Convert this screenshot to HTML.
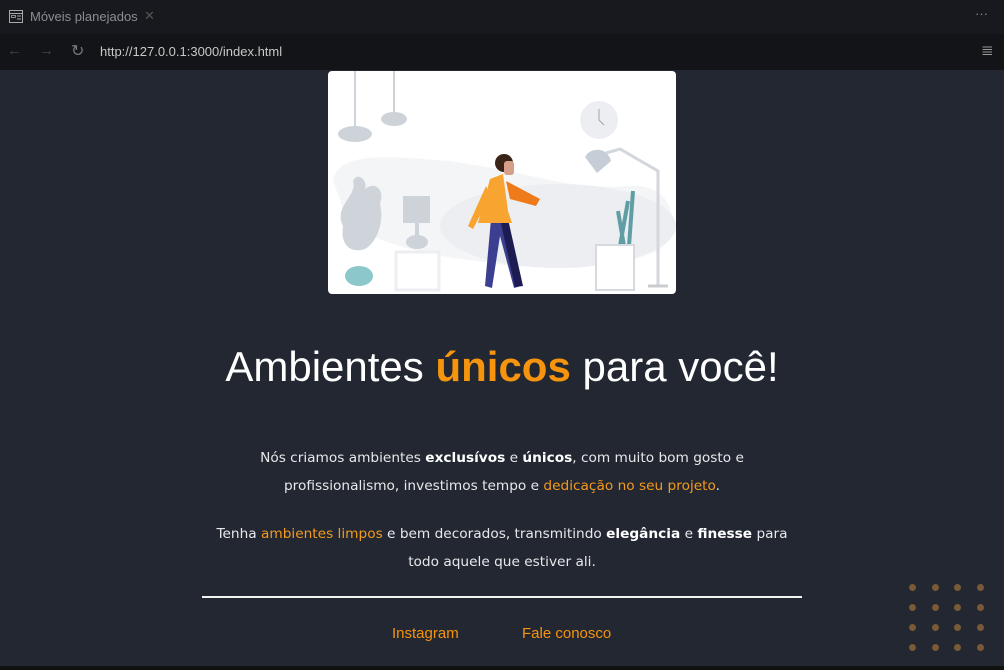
<!DOCTYPE html>
<html><head><meta charset="utf-8"><style>
*{margin:0;padding:0;box-sizing:border-box}
body{width:1004px;height:670px;background:#222731;overflow:hidden;font-family:"Liberation Sans",sans-serif;position:relative}
.tab{position:absolute;top:0;left:0;width:1004px;height:34px;background:#17191e}
.addr{position:absolute;top:34px;left:0;width:1004px;height:36px;background:#121418}
.t{position:absolute;color:#8a8d94;font-size:13px}
.card{position:absolute;left:328px;top:71px;width:348px;height:223px;background:#fff;border-radius:4px;overflow:hidden}
h1{position:absolute;top:343px;left:0;width:1004px;text-align:center;color:#fff;font-weight:400;font-size:42px}
h1 b{color:#f7940e;font-weight:700}
p{position:absolute;left:102px;width:800px;text-align:center;color:#e8e8ea;font-size:13.7px;line-height:28px;font-family:"DejaVu Sans",sans-serif;white-space:nowrap}
p b{color:#fff}
.o{color:#f49a1e}
.hr{position:absolute;left:202px;top:596px;width:600px;height:2px;background:#f2f2f2}
.lk{position:absolute;top:625px;color:#f7940e;font-size:15px}
.dots{position:absolute;left:909px;top:584px}
.dots i{position:absolute;width:7px;height:7px;border-radius:50%;background:#7a5a36}
</style></head><body>
<div class="tab"></div>
<div class="addr"></div>
<svg style="position:absolute;left:9px;top:10px" width="14" height="13" viewBox="0 0 14 13"><rect x="0.5" y="0.5" width="13" height="12" fill="none" stroke="#aaa"/><line x1="1" y1="3.5" x2="13" y2="3.5" stroke="#aaa"/><rect x="2.5" y="5.5" width="4" height="2" fill="none" stroke="#aaa" stroke-width=".8"/><line x1="8" y1="6" x2="12" y2="6" stroke="#aaa"/><line x1="8" y1="9" x2="12" y2="9" stroke="#aaa"/></svg>
<div class="t" style="left:30px;top:9px">Móveis planejados</div>
<div class="t" style="left:144px;top:8px;color:#555">✕</div>
<div class="t" style="left:975px;top:6px;color:#888">···</div>
<div class="t" style="left:7px;top:42px;color:#444;font-size:15px">←</div>
<div class="t" style="left:39px;top:42px;color:#444;font-size:15px">→</div>
<div class="t" style="left:71px;top:41px;color:#777;font-size:16px">↻</div>
<div class="t" style="left:100px;top:44px;color:#c8c8c8">http://127.0.0.1:3000/index.html</div>
<div class="t" style="left:981px;top:41px;color:#999;font-size:15px">≣</div>
<div class="card"><svg width="348" height="223" viewBox="0 0 348 223">
<path d="M5 110 C10 80 60 85 120 90 C200 100 240 120 300 115 C345 112 350 150 340 170 C320 200 200 200 150 190 C100 185 40 170 20 150 Z" fill="#f4f5f7"/>
<ellipse cx="230" cy="155" rx="118" ry="42" fill="#eceef1"/>
<line x1="27" y1="0" x2="27" y2="58" stroke="#cdd3d9" stroke-width="2"/><ellipse cx="27" cy="63" rx="17" ry="8" fill="#cdd3d9"/>
<line x1="66" y1="0" x2="66" y2="42" stroke="#cdd3d9" stroke-width="2"/><ellipse cx="66" cy="48" rx="13" ry="7" fill="#cdd3d9"/>
<circle cx="271" cy="49" r="19" fill="#eceef1"/><path d="M271 38 V49 L276 54" stroke="#9aa" fill="none"/>
<path d="M264 86 L292 78 L330 100 L330 214" stroke="#d3d6da" stroke-width="3" fill="none"/><line x1="320" y1="215" x2="340" y2="215" stroke="#c9ccd1" stroke-width="3"/>
<path d="M257 86 a14 14 0 0 1 26 4 l-14 12 z" fill="#c5ced6"/>
<path d="M300 130 l-8 45 M290 140 l6 35 M305 120 l-4 55" stroke="#5f9ea4" stroke-width="4"/>
<rect x="268" y="174" width="38" height="45" fill="#fff" stroke="#d6d9dd" stroke-width="2"/>
<path d="M15 155 c-10 -20 15 -30 10 -45 c5 -10 15 0 12 8 c10 -8 20 0 15 15 c5 20 -5 40 -15 45 c-15 5 -25 -5 -22 -23z" fill="#cfd4da"/>
<ellipse cx="31" cy="205" rx="14" ry="10" fill="#8cc7cb"/>
<rect x="75" y="125" width="27" height="27" fill="#cdd3d9"/><ellipse cx="89" cy="171" rx="11" ry="7" fill="#cdd3d9"/><rect x="87" y="150" width="4" height="20" fill="#cdd3d9"/>
<rect x="68" y="181" width="43" height="38" fill="#fff" stroke="#eceef1" stroke-width="3"/>
<path d="M157 215 L163 148 L180 148 L193 215 L186 217 L172 165 L164 217 Z" fill="#3c3f8f"/>
<path d="M172 148 L180 148 L195 215 L187 216 Z" fill="#1c1c52"/>
<path d="M150 152 L162 108 L175 103 L180 140 L184 152 Z" fill="#f8a430"/>
<path d="M178 110 L212 128 L208 135 L182 128 Z" fill="#ee7a1a"/>
<path d="M158 115 L140 155 L145 158 L162 125 Z" fill="#f8a430"/>
<circle cx="176" cy="92" r="9" fill="#3a2418"/><rect x="176" y="90" width="10" height="14" rx="3" fill="#d4a08a"/>
</svg></div>
<h1>Ambientes <b>únicos</b> para você!</h1>
<p style="top:444px">Nós criamos ambientes <b>exclusívos</b> e <b>únicos</b>, com muito bom gosto e<br>profissionalismo, investimos tempo e <span class="o">dedicação no seu projeto</span>.</p>
<p style="top:520px">Tenha <span class="o">ambientes limpos</span> e bem decorados, transmitindo <b>elegância</b> e <b>finesse</b> para<br>todo aquele que estiver ali.</p>
<div class="hr"></div>
<div class="lk" style="left:392px">Instagram</div>
<div class="lk" style="left:522px">Fale conosco</div>
<div class="dots">
<i style="left:0;top:0"></i><i style="left:23px;top:0"></i><i style="left:45px;top:0"></i><i style="left:68px;top:0"></i>
<i style="left:0;top:20px"></i><i style="left:23px;top:20px"></i><i style="left:45px;top:20px"></i><i style="left:68px;top:20px"></i>
<i style="left:0;top:40px"></i><i style="left:23px;top:40px"></i><i style="left:45px;top:40px"></i><i style="left:68px;top:40px"></i>
<i style="left:0;top:60px"></i><i style="left:23px;top:60px"></i><i style="left:45px;top:60px"></i><i style="left:68px;top:60px"></i>
</div>
<div style="position:absolute;left:0;top:666px;width:1004px;height:4px;background:#111"></div>
</body></html>
